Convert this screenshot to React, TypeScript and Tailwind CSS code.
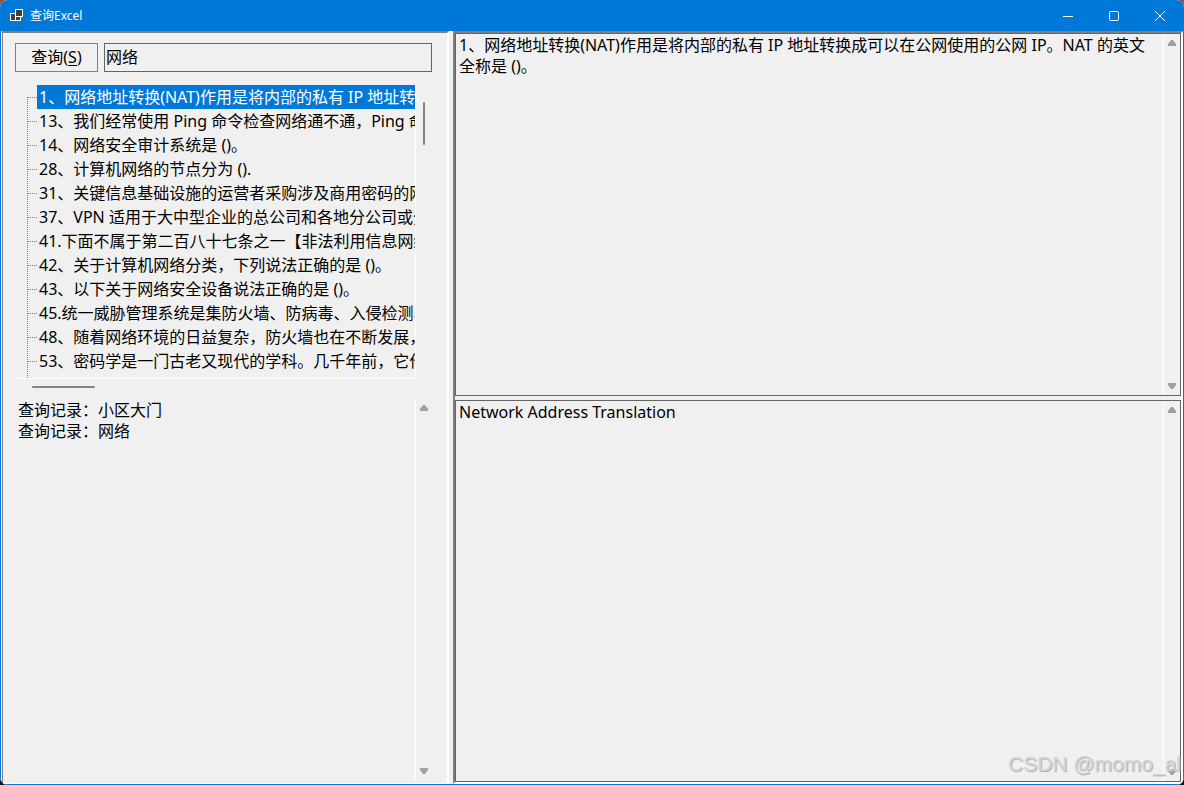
import React, { useState } from "react";

const questions = [
  "1、网络地址转换(NAT)作用是将内部的私有 IP 地址转换成可以在公网使用的公网 IP。NAT 的英文全称是 ()。",
  "13、我们经常使用 Ping 命令检查网络通不通，Ping 命令属于什么协议",
  "14、网络安全审计系统是 ()。",
  "28、计算机网络的节点分为 ().",
  "31、关键信息基础设施的运营者采购涉及商用密码的网络产品和服务",
  "37、VPN 适用于大中型企业的总公司和各地分公司或分支机构的网络互联",
  "41.下面不属于第二百八十七条之一【非法利用信息网络罪】的是",
  "42、关于计算机网络分类，下列说法正确的是 ()。",
  "43、以下关于网络安全设备说法正确的是 ()。",
  "45.统一威胁管理系统是集防火墙、防病毒、入侵检测、上网行为管理",
  "48、随着网络环境的日益复杂，防火墙也在不断发展，以下说法正确的是",
  "53、密码学是一门古老又现代的学科。几千年前，它作为神秘性和艺术性的字谜",
];

function Arrow({ down = false }: { down?: boolean }) {
  return (
    <svg width="8" height="6" viewBox="0 0 8 6" className={down ? "rotate-180" : ""} aria-hidden="true">
      <path d="M3 0h2l3 4v2H0V4z" fill="#a0a0a0" />
    </svg>
  );
}

function ScrollTrack() {
  return (
    <div className="flex w-[17px] shrink-0 flex-col items-center justify-between border-l border-white py-1.5">
      <Arrow />
      <Arrow down />
    </div>
  );
}

function OutputBox({ label, value, className }: { label: string; value: string; className: string }) {
  return (
    <div className={`flex min-h-0 border border-[#646464] ${className}`}>
      <textarea
        aria-label={label}
        readOnly
        value={value}
        className="min-w-0 flex-1 resize-none overflow-hidden bg-transparent pl-[3px] pr-1 pt-px leading-[21px] outline-none"
      />
      <ScrollTrack />
    </div>
  );
}

function TitleBar() {
  return (
    <header className="flex h-[31px] shrink-0 items-center bg-[#0078d7] pl-2 pr-px text-white">
      <svg width="16" height="16" viewBox="0 0 16 16" aria-hidden="true" shapeRendering="crispEdges">
        <g fill="#404040" stroke="#fff">
          <path d="M2.5 5.5h5v7h-5z" />
          <path d="M7.5 8.5h5v4h-5z" />
          <path d="M7.5 1.5h7v7h-7z" />
        </g>
      </svg>
      <h1 className="ml-1.5 flex-1 text-xs">查询Excel</h1>
      <button aria-label="最小化" className="flex h-full w-[46px] items-center justify-center">
        <svg width="10" height="10" viewBox="0 0 10 10"><path d="M0 5.5h10" stroke="#fff" /></svg>
      </button>
      <button aria-label="最大化" className="flex h-full w-[46px] items-center justify-center">
        <svg width="10" height="10" viewBox="0 0 10 10"><rect x=".5" y=".5" width="9" height="9" rx="1" fill="none" stroke="#fff" /></svg>
      </button>
      <button aria-label="关闭" className="flex h-full w-[46px] items-center justify-center">
        <svg width="10" height="10" viewBox="0 0 10 10"><path d="M0 0l10 10M10 0L0 10" stroke="#fff" /></svg>
      </button>
    </header>
  );
}

function QuestionTree({ selected, onSelect }: { selected: number; onSelect: (i: number) => void }) {
  return (
    <div className="flex min-h-0 flex-[310]">
      <div className="flex min-w-0 flex-1 flex-col">
        <div className="min-h-0 flex-1 overflow-hidden pl-3 pt-3">
          <div className="flow-root h-full border-l border-dotted border-[#808080]">
            <ul className="-mt-3">
              {questions.map((q, i) => (
                <li key={q} className="flex h-6 items-center">
                  <span className="w-[9px] shrink-0 border-t border-dotted border-[#808080]" />
                  <button
                    onClick={() => onSelect(i)}
                    className={`h-6 whitespace-nowrap pl-0.5 leading-6 ${i === selected ? "bg-[#0078d7] text-white" : ""}`}
                  >
                    {q}
                  </button>
                </li>
              ))}
            </ul>
          </div>
        </div>
        <div className="h-[17px] shrink-0 border-t border-white pl-[17px] pt-[7px]">
          <div className="h-0.5 w-[63px] rounded-full bg-[#858585]" />
        </div>
      </div>
      <div className="flex w-[17px] shrink-0 flex-col">
        <div className="flex w-full flex-1 justify-center border-l border-white pt-[17px]">
          <div className="h-[43px] w-0.5 rounded-full bg-[#858585]" />
        </div>
        <div className="h-4 shrink-0" />
      </div>
    </div>
  );
}

export default function App() {
  const [keyword, setKeyword] = useState("网络");
  const [selected, setSelected] = useState(0);
  return (
    <div className="h-screen bg-linear-to-b from-[#8f5548] to-[#151515] font-['Noto_Sans','Noto_Sans_CJK_SC',sans-serif] text-base text-black">
      <div className="flex h-full flex-col overflow-hidden rounded-lg bg-[#f0f0f0]">
        <TitleBar />
        <main className="flex min-h-0 flex-1 border-x border-b border-[#0078d7] pl-px">
          <section className="flex w-[447px] shrink-0 flex-col border-2 border-b border-l border-t-[#808080] border-l-[#808080] border-r-white border-b-white pb-[3px] pl-3 pr-[15px] pt-2.5">
            <form className="flex gap-1.5" onSubmit={(e) => e.preventDefault()}>
              <button className="h-[29px] w-[83px] shrink-0 border border-[#808080] text-base leading-[27px]">
                查询(<span className="underline underline-offset-2">S</span>)
              </button>
              <input
                aria-label="查询内容"
                value={keyword}
                onChange={(e) => setKeyword(e.target.value)}
                className="h-[29px] min-w-0 flex-1 border border-[#646464] bg-transparent pb-1 pl-px outline-none"
              />
            </form>
            <div className="mt-[13px] flex min-h-0 flex-1 flex-col gap-1">
              <QuestionTree selected={selected} onSelect={setSelected} />
              <div className="flex min-h-0 flex-[380]">
                <textarea
                  aria-label="查询记录"
                  readOnly
                  value={"查询记录：小区大门\n查询记录：网络"}
                  className="min-w-0 flex-1 resize-none overflow-hidden bg-transparent pl-[3px] pt-px leading-[21px] outline-none"
                />
                <ScrollTrack />
              </div>
            </div>
          </section>
          <section className="relative ml-1 flex min-w-0 flex-1 flex-col gap-1 border-2 border-b-white border-l-[#808080] border-r-white border-t-[#808080]">
            <OutputBox label="题目" value={questions[selected]} className="flex-[362]" />
            <OutputBox label="答案" value="Network Address Translation" className="flex-[382]" />
            <p className="pointer-events-none absolute bottom-1.5 right-0 whitespace-nowrap font-['Liberation_Sans',sans-serif] text-[21px] leading-6 text-[#d4d4d4] [text-shadow:1px_1px_1px_#aaaaaa]">
              CSDN @momo_al
            </p>
          </section>
        </main>
      </div>
    </div>
  );
}
